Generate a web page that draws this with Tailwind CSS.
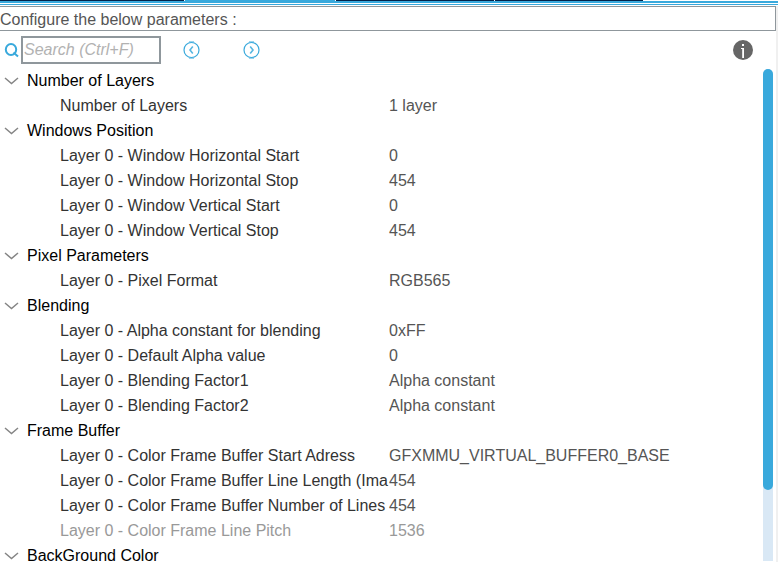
<!DOCTYPE html>
<html lang="en">
<head>
    <meta charset="UTF-8">
    <meta name="viewport" content="width=device-width, initial-scale=1.0">
    <title>Parameter Settings</title>
    <script src="https://cdn.jsdelivr.net/npm/@tailwindcss/browser@4"></script>
</head>
<body class="h-screen overflow-hidden bg-white font-['Liberation_Sans',Arial,sans-serif] text-[16px] leading-[25px] text-[#555555] flex flex-col">
    <!-- Bottom edge of the tab strip -->
    <div class="flex h-px shrink-0 gap-px">
        <div class="w-[184px] bg-[#03234b]"></div>
        <div class="w-[150px] bg-[#39a9dc]"></div>
        <div class="w-[158px] bg-[#03234b]"></div>
        <div class="w-[148px] bg-[#03234b]"></div>
        <div class="flex-1 bg-white"></div>
    </div>
    <div class="h-[2px] shrink-0 bg-[#39a9dc]"></div>
    <div class="mt-px h-px shrink-0 bg-[#39a9dc]"></div>

    <main class="mt-px flex min-h-0 flex-1 flex-col border-r-2 border-[#f0f0f0]">
        <h1 class="h-[25px] shrink-0 border-y border-r border-[#8f979c] leading-[25px]">Configure the below parameters :</h1>

        <div class="flex h-[37px] shrink-0 items-center pl-1 pr-[23px]">
            <label for="search" class="w-[17px]" aria-label="Search">
                <svg class="h-4 w-[15px]" viewBox="0 0 15 16" fill="none" stroke="#39a9dc" stroke-width="2">
                    <ellipse cx="7" cy="7.5" rx="5.2" ry="5.5"/>
                    <path d="M9.5 10.5l4.5 4"/>
                </svg>
            </label>
            <input id="search" type="text" placeholder="Search (Ctrl+F)" class="h-7 w-[140px] border-2 border-[#8f979c] px-px outline-none placeholder:italic placeholder:text-[#b2b2b2]">
            <div class="flex flex-1 gap-[42px] pl-[22px]">
                <button aria-label="Previous result">
                    <svg class="size-[18px]" viewBox="0 0 18 18" fill="none" stroke="#39a9dc">
                        <path d="M6 .8h5M6 17.2h5" stroke-width="1.5" stroke-opacity=".5"/>
                        <circle cx="8.5" cy="9" r="7.5" stroke-width="1.2"/>
                        <path d="M9.8 5.5L7 9l2.8 3.5" stroke-width="1.6" stroke-opacity=".85"/>
                    </svg>
                </button>
                <button aria-label="Next result">
                    <svg class="size-[18px]" viewBox="0 0 18 18" fill="none" stroke="#39a9dc">
                        <path d="M6 .8h5M6 17.2h5" stroke-width="1.5" stroke-opacity=".5"/>
                        <circle cx="8.5" cy="9" r="7.5" stroke-width="1.2"/>
                        <path d="M7.2 5.5L10 9l-2.8 3.5" stroke-width="1.6" stroke-opacity=".85"/>
                    </svg>
                </button>
            </div>
            <button aria-label="Information">
                <svg class="size-5" viewBox="0 0 20 20">
                    <circle cx="10" cy="10" r="10" fill="#666666"/>
                    <path d="M9 4h2v2H9zM8 8h3v10H9.2V9H8z" fill="#ffffff"/>
                </svg>
            </button>
        </div>

        <div class="flex min-h-0 flex-1">
            <div id="params" class="min-w-0 flex-1 overflow-hidden"></div>
            <div class="mb-px mr-[3px] mt-px w-[10px] shrink-0 rounded-t-full bg-[#d9e8f5]">
                <div class="h-[calc(100%-71px)] rounded-full bg-[#39a9dc]"></div>
            </div>
        </div>
    </main>

    <script>
        const groups = [
            { title: 'Number of Layers', rows: [['Number of Layers', '1 layer']] },
            { title: 'Windows Position', rows: [
                ['Layer 0 - Window Horizontal Start', '0'],
                ['Layer 0 - Window Horizontal Stop', '454'],
                ['Layer 0 - Window Vertical Start', '0'],
                ['Layer 0 - Window Vertical Stop', '454'],
            ] },
            { title: 'Pixel Parameters', rows: [['Layer 0 - Pixel Format', 'RGB565']] },
            { title: 'Blending', rows: [
                ['Layer 0 - Alpha constant for blending', '0xFF'],
                ['Layer 0 - Default Alpha value', '0'],
                ['Layer 0 - Blending Factor1', 'Alpha constant'],
                ['Layer 0 - Blending Factor2', 'Alpha constant'],
            ] },
            { title: 'Frame Buffer', rows: [
                ['Layer 0 - Color Frame Buffer Start Adress', 'GFXMMU_VIRTUAL_BUFFER0_BASE'],
                ['Layer 0 - Color Frame Buffer Line Length (Ima', '454'],
                ['Layer 0 - Color Frame Buffer Number of Lines', '454'],
                ['Layer 0 - Color Frame Line Pitch', '1536', true],
            ] },
            { title: 'BackGround Color', rows: [] },
        ];

        // Third item of a row marks it as read-only
        document.getElementById('params').innerHTML = groups.map(group => `
            <details open>
                <summary class="flex h-[25px] cursor-default items-center gap-2 pl-1 text-black">
                    <svg class="h-2 w-[15px]" viewBox="0 0 15 8" fill="none" stroke="#858585" stroke-width="1.5"><path d="M1 1l6.5 5.5L14 1"/></svg>
                    ${group.title}
                </summary>
                <table class="w-full table-fixed">
                    <tbody>
                        ${group.rows.map(([name, value, disabled]) => `
                            <tr class="h-[25px]">
                                <th scope="row" class="w-[389px] whitespace-nowrap p-0 pl-[60px] text-left font-normal ${disabled ? 'text-[#999999]' : 'text-[#333333]'}">${name}</th>
                                <td class="p-0 ${disabled ? 'text-[#999999]' : 'text-[#555555]'}">${value}</td>
                            </tr>`).join('')}
                    </tbody>
                </table>
            </details>`).join('');
    </script>
</body>
</html>
